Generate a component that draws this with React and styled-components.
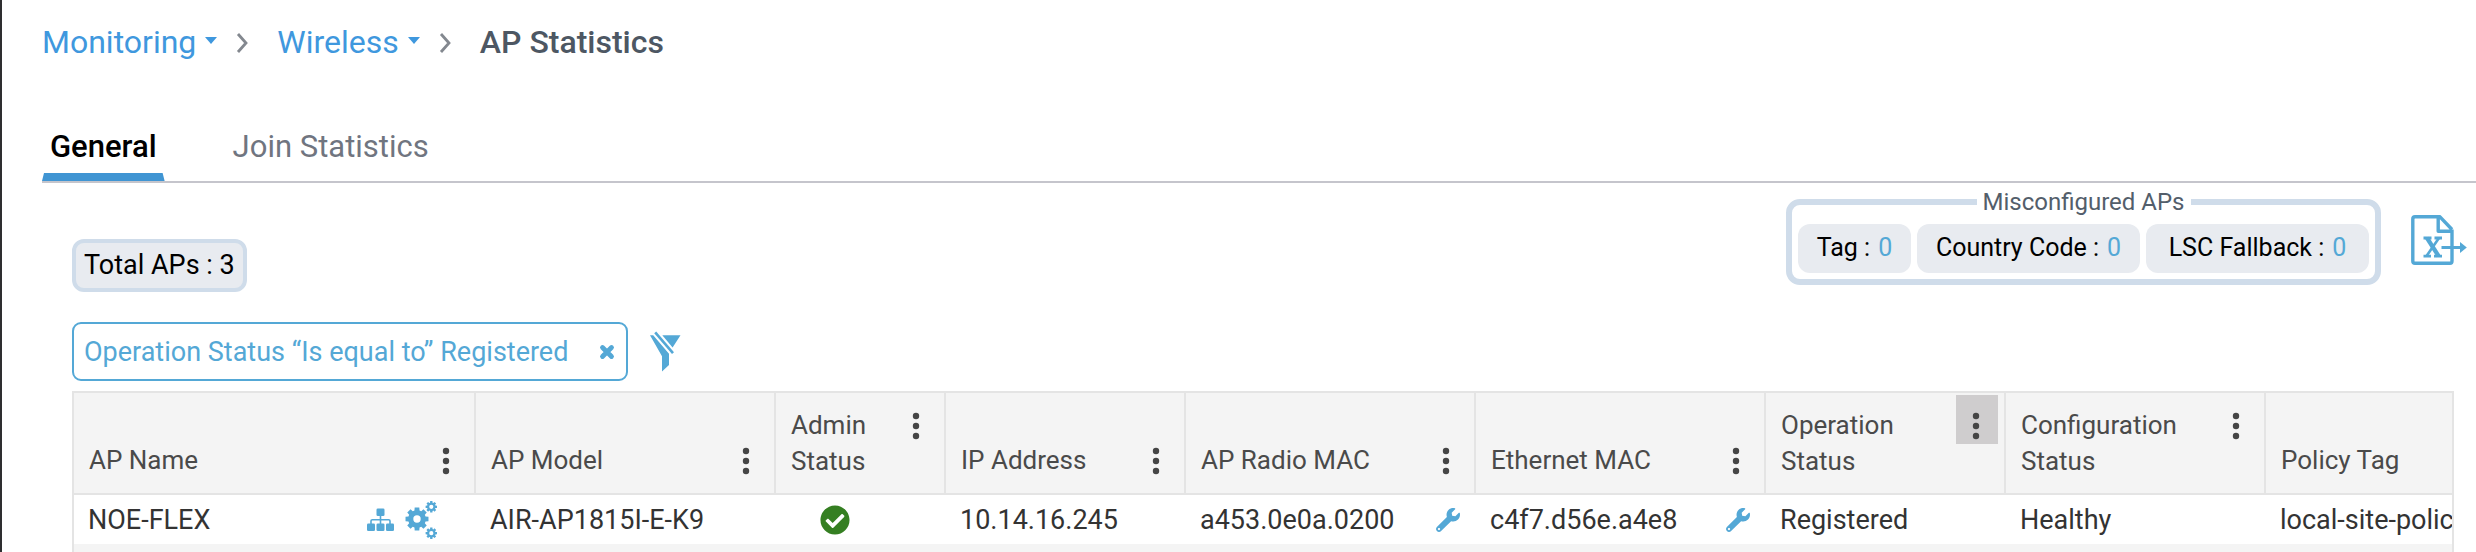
import React from "react";
import styled, { createGlobalStyle } from "styled-components";
import { FaWrench, FaCheckCircle } from "react-icons/fa";

const color = {
  link: "#3f98de",
  accent: "#54a8d6",
  frame: "#cfdcea",
  pill: "#e8ebf0",
  line: "#e4e4e4",
  stripe: "#f4f4f4",
};

const GlobalStyle = createGlobalStyle`
  *, *::before, *::after { box-sizing: border-box; }
  body {
    margin: 0;
    background: #fff;
    font-family: Roboto, "Liberation Sans", sans-serif;
    font-size: 27px;
    line-height: 36px;
    color: #333;
  }
  button { font: inherit; color: inherit; background: none; border: 0; padding: 0; cursor: pointer; }
  a { color: inherit; text-decoration: none; }
`;

const Page = styled.main`
  display: flex;
  flex-direction: column;
  min-height: 100vh;
  border-left: 2px solid #2e2e30;
  overflow: hidden;
`;

const Breadcrumb = styled.nav`
  display: flex;
  align-items: center;
  padding: 22px 40px 0;
  font-size: 32px;
  line-height: 40px;
`;

const CrumbLink = styled.a`
  display: flex;
  align-items: center;
  gap: 9px;
  color: ${color.link};
`;

const Caret = styled.span`
  border: 6px solid transparent;
  border-top: 7px solid ${color.link};
  border-bottom: 0;
  margin-bottom: 4px;
`;

const Separator = styled.svg`
  width: 14px;
  height: 22px;
  margin: 0 28px 0 18px;
`;

const CurrentCrumb = styled.h1`
  margin: 0;
  font-size: 32px;
  line-height: 40px;
  font-weight: 500;
  color: #4d5763;
`;

const Tabs = styled.div`
  display: flex;
  gap: 60px;
  margin: 64px 0 0 40px;
  border-bottom: 2px solid #c5c5cc;
`;

const Tab = styled.button`
  position: relative;
  height: 55px;
  padding: 0 8px 14px;
  font-size: 31px;
  font-weight: ${(p) => (p.$active ? 500 : 400)};
  color: ${(p) => (p.$active ? "#000" : "#707580")};

  &::after {
    content: "";
    display: ${(p) => (p.$active ? "block" : "none")};
    position: absolute;
    left: 0;
    right: 0;
    bottom: 0;
    height: 8px;
    background: #4095d3;
    clip-path: polygon(2px 0, calc(100% - 2px) 0, 100% 100%, 0 100%);
  }
`;

const Toolbar = styled.section`
  display: flex;
  justify-content: space-between;
  align-items: flex-end;
  padding: 5px 9px 0 70px;
`;

const TotalBadge = styled.div`
  padding: 4px 8px 5px;
  border: 4px solid ${color.frame};
  border-radius: 12px;
  background: ${color.pill};
  color: #000;
`;

const ToolbarRight = styled.div`
  display: flex;
  align-items: center;
  gap: 30px;
  padding-bottom: 7px;
`;

const MisconfiguredGroup = styled.fieldset`
  display: flex;
  gap: 6px;
  margin: 0;
  padding: 8px 6px 6px;
  border: 6px solid ${color.frame};
  border-radius: 14px;
  font-size: 25px;
  line-height: 28px;
`;

const GroupTitle = styled.legend`
  margin: 0 auto;
  padding: 0 6px;
  font-size: 24px;
  color: #535e6b;
`;

const CountPill = styled.a`
  display: flex;
  justify-content: center;
  align-items: center;
  gap: 8px;
  min-width: ${(p) => (p.$wide ? "223px" : "113px")};
  height: 49px;
  padding-bottom: 1px;
  border-radius: 12px;
  background: ${color.pill};
  color: #000;
`;

const Count = styled.span`
  color: ${color.accent};
`;

const ExportButton = styled.button`
  display: flex;
  margin-top: 6px;
`;

const FilterRow = styled.div`
  display: flex;
  align-items: center;
  gap: 22px;
  padding: 30px 0 10px 70px;
`;

const FilterChip = styled.div`
  display: flex;
  align-items: center;
  gap: 31px;
  height: 59px;
  padding: 0 11px 0 10px;
  border: 2px solid ${color.accent};
  border-radius: 9px;
  color: ${color.accent};
`;

const IconButton = styled.button`
  display: flex;
  color: ${color.accent};
`;

const GridPanel = styled.div`
  flex: 1;
  margin: 0 22px 0 70px;
  border: solid ${color.line};
  border-width: 2px 2px 0;
  background: ${color.stripe};
  overflow: hidden;
`;

const Table = styled.table`
  table-layout: fixed;
  width: 100%;
  min-width: 2510px;
  border-spacing: 0;
`;

const Col = styled.col`
  width: ${(p) => p.$width}px;
`;

const HeaderCell = styled.th`
  height: 102px;
  padding: 0 0 14px;
  border-right: 2px solid ${color.line};
  border-bottom: 2px solid ${color.line};
  text-align: left;
  vertical-align: bottom;
  font-size: 26px;
  font-weight: 400;
  color: #4a4a4a;
`;

const HeaderContent = styled.div`
  display: flex;
  justify-content: space-between;
  align-items: flex-start;
  padding: 0 6px 0 15px;
`;

const HeaderLabel = styled.span`
  padding-top: 12px;
`;

const MenuButton = styled.button`
  display: flex;
  flex: none;
  justify-content: center;
  align-items: flex-start;
  width: 42px;
  height: 49px;
  padding: 17px 2px 0 0;
  background: ${(p) => (p.$active ? "#cfcdce" : "transparent")};
`;

const Cell = styled.td`
  height: 49px;
  padding: 0;
  background: #fff;
  white-space: nowrap;
`;

const CellContent = styled.div`
  display: flex;
  align-items: center;
  justify-content: space-between;
  padding: 0 16px 0 ${(p) => (p.$icon ? 44 : 14)}px;
`;

const CellIcons = styled.span`
  display: flex;
  align-items: center;
  gap: 11px;
  color: ${color.accent};
  padding-right: ${(p) => (p.$inset ? 22 : 0)}px;
`;

const StatusOk = styled(FaCheckCircle)`
  color: #357f22;
`;

function gear(cx, cy, outer, inner, hole) {
  const points = [];
  for (let i = 0; i < 8; i += 1) {
    const mid = (i * Math.PI) / 4;
    [[-0.29, inner], [-0.2, outer], [0.2, outer], [0.29, inner]].forEach(([a, r]) => {
      points.push(`${(cx + r * Math.sin(mid + a)).toFixed(2)} ${(cy - r * Math.cos(mid + a)).toFixed(2)}`);
    });
  }
  return `M${points.join("L")}Z M${cx - hole} ${cy}a${hole} ${hole} 0 1 0 ${2 * hole} 0a${hole} ${hole} 0 1 0 ${-2 * hole} 0Z`;
}

const GearsIcon = () => (
  <svg width="33" height="38" viewBox="0 0 33 38" fill="currentColor" fillRule="evenodd" aria-hidden="true">
    <path d={gear(12, 18, 11.7, 8.9, 3.7)} />
    <path d={gear(26.3, 5.8, 5.8, 4.3, 2.1)} />
    <path d={gear(26.3, 32.2, 5.8, 4.3, 2.1)} />
  </svg>
);

const SitemapIcon = () => (
  <svg width="27" height="24" viewBox="0 0 27 24" fill="currentColor" aria-hidden="true">
    <rect x="9.5" y="0.5" width="8" height="7.5" rx="1.3" />
    <rect x="0" y="15.5" width="8" height="7.5" rx="1.3" />
    <rect x="9.5" y="15.5" width="8" height="7.5" rx="1.3" />
    <rect x="19" y="15.5" width="8" height="7.5" rx="1.3" />
    <path d="M4 16v-3q0-1.3 1.3-1.3h16.4q1.3 0 1.3 1.3v3M13.5 7v9" fill="none" stroke="currentColor" strokeWidth="1.6" />
  </svg>
);

const DotsIcon = () => (
  <svg width="8" height="28" viewBox="0 0 8 28" fill="#454545" aria-hidden="true">
    <circle cx="4" cy="4" r="3.2" />
    <circle cx="4" cy="14" r="3.2" />
    <circle cx="4" cy="24" r="3.2" />
  </svg>
);

const CloseIcon = () => (
  <svg width="16" height="16" viewBox="0 0 16 16" aria-hidden="true">
    <path d="M3.5 3.5l9 9M12.5 3.5l-9 9" stroke="currentColor" strokeWidth="4.8" strokeLinecap="round" />
  </svg>
);

const FunnelIcon = () => (
  <svg width="31" height="41" viewBox="0 0 31 41" fill="currentColor" aria-hidden="true">
    <path d="M0 4.3h3.2L19 22.8V34l-7 6.5V25.2Z" />
    <path d="M12.3 4.3H30.5L22.6 16.6Z" />
    <path d="M5.2 1.3L23 22.2" stroke="#fff" strokeWidth="5.4" />
    <path d="M5.2 1.3L23 22.2" stroke="currentColor" strokeWidth="2.6" />
  </svg>
);

const ExportIcon = () => (
  <svg width="56" height="50" viewBox="0 0 56 50" fill="none" stroke={color.accent} strokeWidth="3.4" aria-hidden="true">
    <path d="M41 14.5V46Q41 48.2 39 48.2H4Q1.8 48.2 1.8 46V4Q1.8 1.8 4 1.8H29L41 14.5M27.2 2V16.2H41" strokeLinejoin="round" />
    <path d="M12.5 23h8M23.5 23h7.5M12.5 41.2h7.5M23 41.2h8" strokeWidth="2.8" />
    <path d="M16 23L27.5 41" strokeWidth="4.2" />
    <path d="M28 23L15.5 41" strokeWidth="2.6" />
    <path d="M30.5 32.5H50" strokeWidth="3" />
    <path d="M49 27L55.8 32.5L49 38Z" fill={color.accent} stroke="none" />
  </svg>
);

const SeparatorIcon = () => (
  <Separator viewBox="0 0 14 22" aria-hidden="true">
    <path d="M3 3L11 12L3 21" fill="none" stroke="#83888f" strokeWidth="2.8" />
  </Separator>
);

const columns = [
  { label: "AP Name", width: 402 },
  { label: "AP Model", width: 300 },
  { label: "Admin Status", width: 170 },
  { label: "IP Address", width: 240 },
  { label: "AP Radio MAC", width: 290 },
  { label: "Ethernet MAC", width: 290 },
  { label: "Operation Status", width: 240, active: true },
  { label: "Configuration Status", width: 260 },
  { label: "Policy Tag", width: 318 },
];

const counts = [
  { label: "Tag", value: 0 },
  { label: "Country Code", value: 0, wide: true },
  { label: "LSC Fallback", value: 0, wide: true },
];

export default function App() {
  return (
    <Page>
      <GlobalStyle />
      <Breadcrumb aria-label="Breadcrumb">
        <CrumbLink href="#monitoring">Monitoring<Caret /></CrumbLink>
        <SeparatorIcon />
        <CrumbLink href="#wireless">Wireless<Caret /></CrumbLink>
        <SeparatorIcon />
        <CurrentCrumb>AP Statistics</CurrentCrumb>
      </Breadcrumb>

      <Tabs role="tablist">
        <Tab role="tab" aria-selected="true" $active>General</Tab>
        <Tab role="tab" aria-selected="false">Join Statistics</Tab>
      </Tabs>

      <Toolbar>
        <TotalBadge>Total APs : 3</TotalBadge>
        <ToolbarRight>
          <MisconfiguredGroup>
            <GroupTitle>Misconfigured APs</GroupTitle>
            {counts.map((c) => (
              <CountPill key={c.label} href="#misconfigured" $wide={c.wide}>
                {c.label} : <Count>{c.value}</Count>
              </CountPill>
            ))}
          </MisconfiguredGroup>
          <ExportButton aria-label="Export to Excel"><ExportIcon /></ExportButton>
        </ToolbarRight>
      </Toolbar>

      <FilterRow>
        <FilterChip>
          Operation Status “Is equal to” Registered
          <IconButton aria-label="Remove filter"><CloseIcon /></IconButton>
        </FilterChip>
        <IconButton aria-label="Clear filters"><FunnelIcon /></IconButton>
      </FilterRow>

      <GridPanel>
        <Table>
          <colgroup>
            {columns.map((c) => <Col key={c.label} $width={c.width} />)}
          </colgroup>
          <thead>
            <tr>
              {columns.map((c) => (
                <HeaderCell key={c.label} scope="col">
                  <HeaderContent>
                    <HeaderLabel>{c.label}</HeaderLabel>
                    <MenuButton aria-label={`${c.label} column menu`} $active={c.active}><DotsIcon /></MenuButton>
                  </HeaderContent>
                </HeaderCell>
              ))}
            </tr>
          </thead>
          <tbody>
            <tr>
              <Cell>
                <CellContent>
                  NOE-FLEX
                  <CellIcons $inset><SitemapIcon /><GearsIcon /></CellIcons>
                </CellContent>
              </Cell>
              <Cell><CellContent>AIR-AP1815I-E-K9</CellContent></Cell>
              <Cell><CellContent $icon><StatusOk size={30} title="Enabled" /></CellContent></Cell>
              <Cell><CellContent>10.14.16.245</CellContent></Cell>
              <Cell>
                <CellContent>a453.0e0a.0200<CellIcons><FaWrench size={24} /></CellIcons></CellContent>
              </Cell>
              <Cell>
                <CellContent>c4f7.d56e.a4e8<CellIcons><FaWrench size={24} /></CellIcons></CellContent>
              </Cell>
              <Cell><CellContent>Registered</CellContent></Cell>
              <Cell><CellContent>Healthy</CellContent></Cell>
              <Cell><CellContent>local-site-policy</CellContent></Cell>
            </tr>
          </tbody>
        </Table>
      </GridPanel>
    </Page>
  );
}
